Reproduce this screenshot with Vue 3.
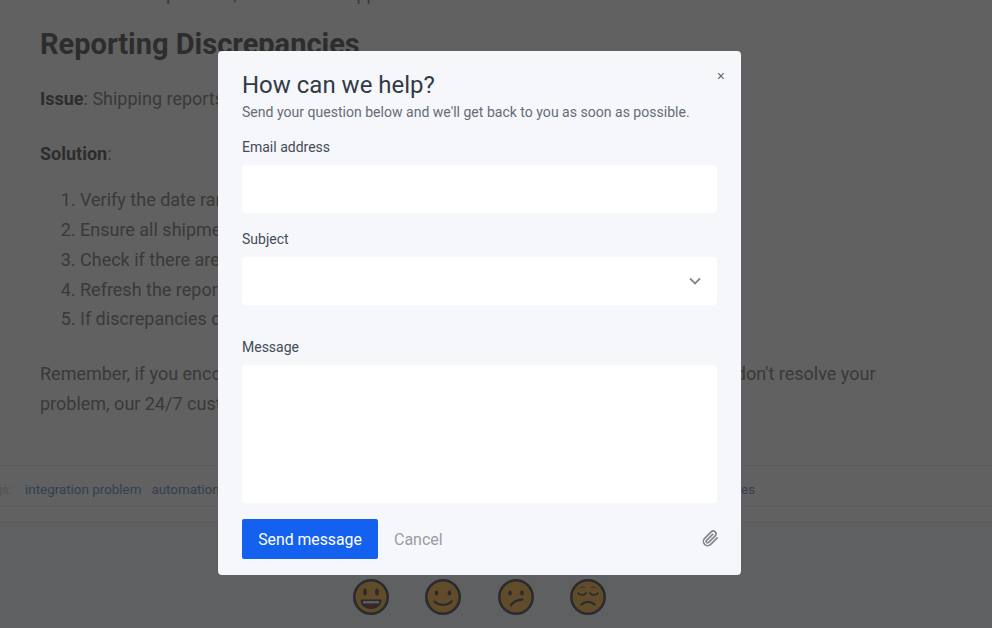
<template>
  <div class="page">
    <article class="article">
      <p class="cut-line">For some other partners, contact our support.</p>
      <h2>Reporting Discrepancies</h2>
      <p><strong>Issue</strong>: Shipping reports show incorrect data</p>
      <p class="solution"><strong>Solution</strong>:</p>
      <ol>
        <li v-for="step in steps" :key="step">{{ step }}</li>
      </ol>
      <p class="closing">
        Remember, if you encounter any other issues that the suggested troubleshooting steps don't resolve your<br />
        problem, our 24/7 customer support team is always ready to help.
      </p>
    </article>

    <div class="tags">
      <span class="tags-label">Tags:</span>
      <a v-for="tag in tags" :key="tag">{{ tag }}</a>
    </div>

    <div class="feedback">
      <svg v-for="face in faces" :key="face.name" class="face" viewBox="0 0 36 36" :aria-label="face.name">
        <circle cx="18" cy="18" r="16.7" fill="#fcc86e" stroke="#717177" stroke-width="2.6" />
        <g v-html="face.parts"></g>
      </svg>
    </div>
  </div>

  <div class="overlay">
    <form class="modal" @submit.prevent>
      <button class="close" type="button">×</button>
      <h1>How can we help?</h1>
      <p class="intro">Send your question below and we'll get back to you as soon as possible.</p>

      <label class="field">
        <span>Email address</span>
        <input type="email" />
      </label>

      <label class="field">
        <span>Subject</span>
        <div class="select-wrap">
          <select></select>
          <svg class="chevron" viewBox="0 0 12 8"><path d="M1 1.5l5 5 5-5" /></svg>
        </div>
      </label>

      <label class="field message">
        <span>Message</span>
        <textarea></textarea>
      </label>

      <div class="actions">
        <button class="send" type="submit">Send message</button>
        <button class="cancel" type="button">Cancel</button>
        <svg class="clip" viewBox="0 0 24 24">
          <path d="M21.44 11.05l-9.19 9.19a6 6 0 0 1-8.49-8.49l9.19-9.19a4 4 0 0 1 5.66 5.66l-9.2 9.19a2 2 0 0 1-2.83-2.83l8.49-8.48" />
        </svg>
      </div>
    </form>
  </div>
</template>

<script setup>
const steps = [
  "Verify the date range selected in the report",
  "Ensure all shipments have been synced",
  "Check if there are any active filters",
  "Refresh the report data",
  "If discrepancies continue, export the raw data",
]

const tags = ["integration problem", "automation", "shipping", "reporting", "label printing", "data sync", "carrier rates", "order status", "discrepancies"]

const eye = (x, y, ry = 2.5) => `<ellipse cx="${x}" cy="${y}" rx="1.9" ry="${ry}" fill="#717177"/>`

const faces = [
  {
    name: "Great",
    parts: eye(12, 13, 3.6) + eye(24, 13, 3.6) +
      '<path d="M7.5 20.5h21c0 6-4.5 9.5-10.5 9.5s-10.5-3.5-10.5-9.5z" fill="#717177"/>' +
      '<path d="M10 22h16v2.5H10z" fill="#f3f3f3"/>' +
      '<ellipse cx="18" cy="27" rx="4" ry="1.8" fill="#b06a5a"/>',
  },
  {
    name: "Good",
    parts: eye(11.5, 14) + eye(24.5, 14) +
      '<path d="M9.5 22.5c4.5 4.5 12.5 4.5 17 0" fill="none" stroke="#717177" stroke-width="2.4" stroke-linecap="round"/>',
  },
  {
    name: "Meh",
    parts: eye(12, 14) + eye(24, 14) +
      '<path d="M13 26c2.5-3.5 6-5 11-5.5" fill="none" stroke="#717177" stroke-width="2.4" stroke-linecap="round"/>',
  },
  {
    name: "Bad",
    parts: '<path d="M8 14c2 2.5 6 2.5 8 0M20 14c2 2.5 6 2.5 8 0" fill="none" stroke="#717177" stroke-width="1.8" stroke-linecap="round"/>' +
      '<path d="M9.5 9.5c2-2 4-2 6-.5M20.5 9c2-1.5 4-1.5 6 .5" fill="none" stroke="#9c8a6c" stroke-width="1"/>' +
      '<path d="M11.5 25.5c3.5-3.5 9.5-3.5 13 0" fill="none" stroke="#717177" stroke-width="2.4" stroke-linecap="round"/>',
  },
]
</script>

<style>
body {
  margin: 0;
  overflow: hidden;
}
</style>

<style scoped>
.page {
  position: relative;
  height: 628px;
  overflow: hidden;
  background: #fff;
  font-family: Roboto, "Liberation Sans", sans-serif;
  color: #989898;
}

.article {
  padding: 0 40px;
  font-size: 18px;
  line-height: 29.75px;
}

.article p {
  margin: 0 0 25px;
}

.article .cut-line {
  margin: -21px 0 0;
  height: 29.75px;
}

.article h2 {
  margin: 17px 0 22px;
  font-size: 29px;
  line-height: 36px;
  font-weight: 700;
  color: #767676;
}

.article strong {
  color: #767676;
}

.article .solution {
  margin-bottom: 17px;
}

.article ol {
  margin: 0 0 25px;
  padding-left: 40px;
}

.tags {
  display: flex;
  align-items: center;
  gap: 10px;
  box-sizing: border-box;
  margin: 46px 0 0;
  height: 42px;
  padding: 8px 25px 0;
  border-top: 1px dotted #dfe6ee;
  border-bottom: 1px dotted #dfe6ee;
  font-size: 13.4px;
  white-space: nowrap;
}

.tags-label {
  position: absolute;
  left: -20px;
  color: #d8d8d8;
}

.tags a {
  color: #86a8d6;
}

.feedback {
  display: flex;
  justify-content: center;
  gap: 36.5px;
  margin: 15px 0 0;
  padding: 56px 33px 0 0;
  border-top: 1px solid #eef0f4;
  background: #fafbff;
  height: 110px;
}

.face {
  width: 36px;
  height: 36px;
}

.overlay {
  position: fixed;
  inset: 0;
  display: flex;
  align-items: flex-start;
  background: rgba(0, 0, 0, 0.62);
  font-family: Roboto, "Liberation Sans", sans-serif;
}

.modal {
  position: relative;
  box-sizing: border-box;
  width: 523px;
  height: 524px;
  margin: 51px 0 0 218px;
  padding: 20px 24px 16px;
  background: #f5f7fb;
  border-radius: 4px;
  color: #363d47;
}

.close {
  position: absolute;
  top: 16px;
  right: 16px;
  padding: 0;
  border: 0;
  background: none;
  font-size: 14px;
  line-height: 18px;
  color: #5f6368;
}

.modal h1 {
  margin: 0;
  font-size: 24px;
  line-height: 28px;
  font-weight: 400;
  color: #323a46;
}

.intro {
  margin: 3px 0 0;
  font-size: 14.05px;
  line-height: 20px;
  color: #676c75;
}

.field {
  display: flex;
  flex-direction: column;
  margin-top: 16px;
  font-size: 14px;
  line-height: 18px;
  color: #454b55;
}

.field span {
  margin-bottom: 9px;
}

.field + .field {
  margin-top: 17px;
}

.field.message {
  margin-top: 33px;
}

input,
select,
textarea {
  box-sizing: border-box;
  width: 100%;
  border: 0;
  border-radius: 4px;
  background: #fff;
  outline: none;
  display: block;
}

input,
select {
  height: 48px;
}

select {
  appearance: none;
}

textarea {
  height: 138px;
  resize: none;
}

.select-wrap {
  position: relative;
}

.chevron {
  position: absolute;
  top: 20px;
  right: 16px;
  width: 12px;
  height: 8px;
  fill: none;
  stroke: #85878d;
  stroke-width: 1.8;
}

.actions {
  display: flex;
  align-items: center;
  gap: 16px;
  margin-top: 16px;
}

.send {
  width: 136px;
  height: 40px;
  border: 0;
  border-radius: 2px;
  background: #1461f0;
  color: #fff;
  font: inherit;
  font-size: 15.8px;
}

.cancel {
  padding: 0;
  border: 0;
  background: none;
  color: #9a9ca1;
  font: inherit;
  font-size: 16px;
}

.clip {
  width: 17px;
  height: 17px;
  margin: 0 -2px 2px auto;
  fill: none;
  stroke: #85878d;
  stroke-width: 2.4;
  stroke-linecap: round;
  stroke-linejoin: round;
}
</style>
